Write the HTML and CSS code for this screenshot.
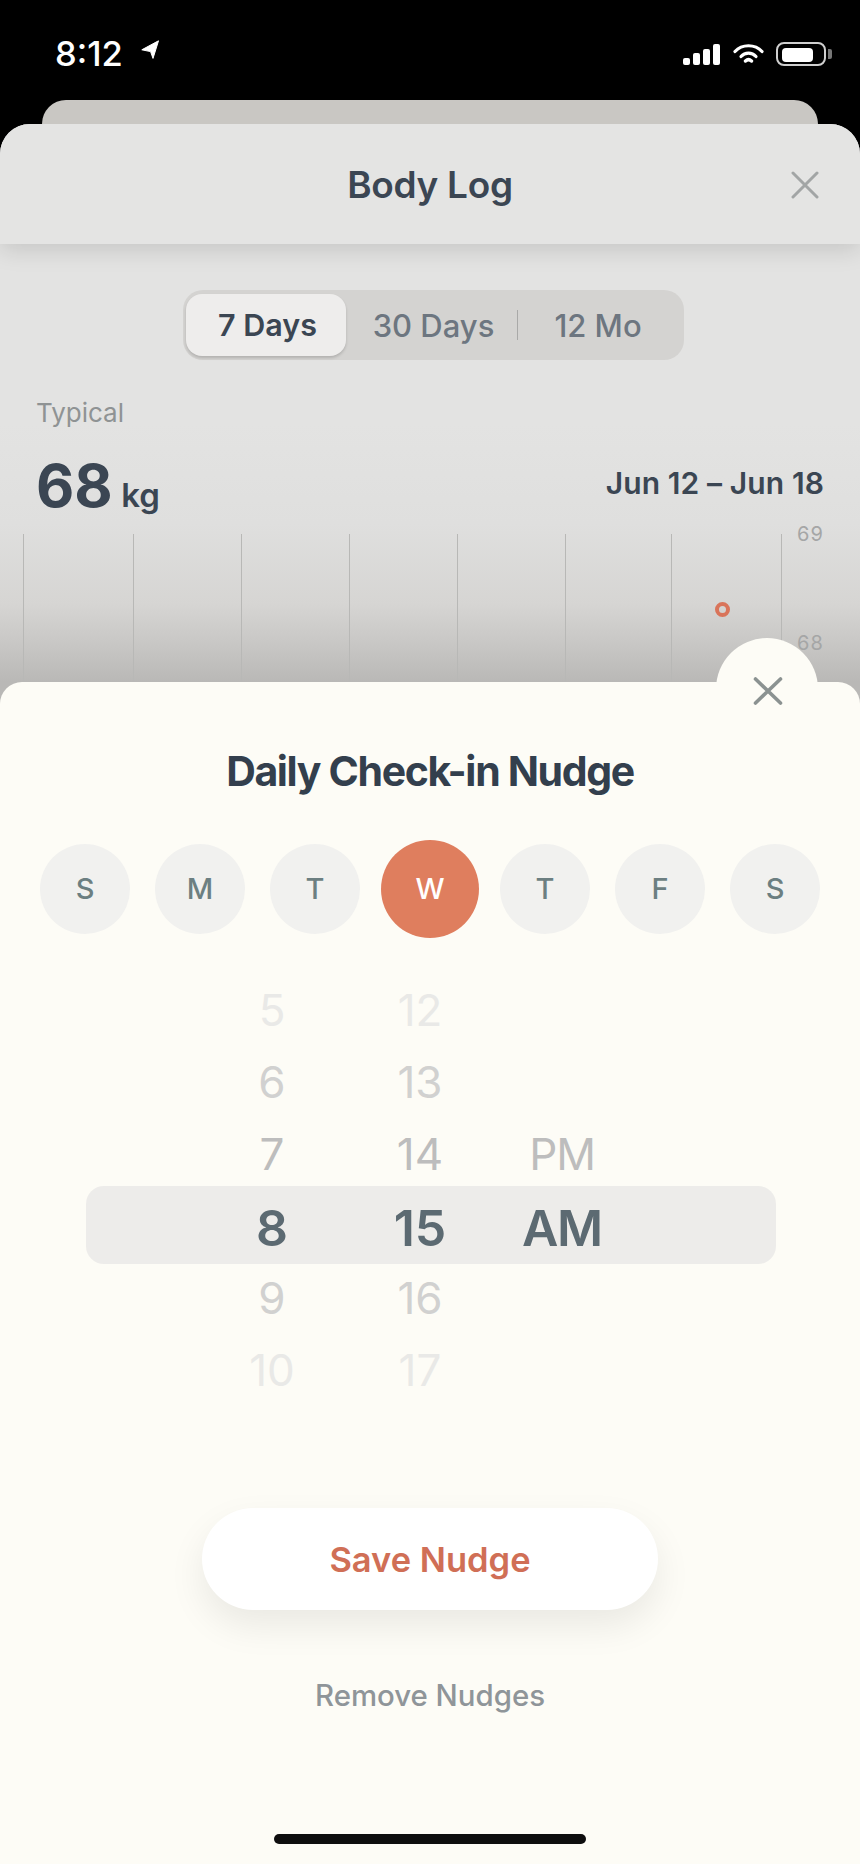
FILE: index.html
```html
<!DOCTYPE html>
<html lang="en">
<head>
    <meta charset="UTF-8">
    <meta name="viewport" content="width=device-width, initial-scale=1.0">
    <title>Daily Check-in Nudge</title>
    <link rel="stylesheet" href="styles.css">
</head>
<body>
    <div class="screen">
        <div class="status-bar">
            <div class="status-left">
                <span class="clock">8:12</span>
                <svg class="arrow" width="18" height="19" viewBox="0 0 18 19"><path d="M17.5 .8 L.8 9.8 L9.6 11.6 L12 18.4 Z" fill="#fff" stroke="#fff" stroke-width="1" stroke-linejoin="round"/></svg>
            </div>
            <div class="status-right">
                <div class="signal">
                    <span class="bar bar1"></span>
                    <span class="bar bar2"></span>
                    <span class="bar bar3"></span>
                    <span class="bar bar4"></span>
                </div>
                <svg class="wifi" width="31" height="20" viewBox="0 0 31 20" fill="none" stroke="#fff" stroke-linecap="round"><path d="M2 8.5C9 .8 22 .8 29 8.5" stroke-width="3.2"/><path d="M8 13.5C12 9 19 9 23 13.5" stroke-width="3.2"/><path d="M12.5 18C14.5 16.2 16.5 16.2 18.5 18" stroke-width="3.4"/></svg>
                <div class="battery">
                    <div class="battery-body"><span class="battery-fill"></span></div>
                    <span class="battery-cap"></span>
                </div>
            </div>
        </div>

        <div class="back-sheet"></div>

        <section class="log-sheet">
            <header class="log-header">
                <h1>Body Log</h1>
                <svg class="log-close" width="28" height="28" viewBox="0 0 28 28" stroke="#a2a5a5" stroke-width="3" stroke-linecap="round"><path d="M2 2L26 26M26 2L2 26"/></svg>
            </header>

            <div class="tabs">
                <div class="tab tab-active">7 Days</div>
                <div class="tab tab-mid">30 Days</div>
                <div class="tab-divider"></div>
                <div class="tab tab-last">12 Mo</div>
            </div>

            <p class="typical">Typical</p>
            <div class="summary">
                <div class="weight"><span class="weight-num">68</span> <span class="weight-unit">kg</span></div>
                <div class="range">Jun 12 – Jun 18</div>
            </div>

            <div class="chart">
                <div class="chart-col"></div>
                <div class="chart-col"></div>
                <div class="chart-col"></div>
                <div class="chart-col"></div>
                <div class="chart-col"></div>
                <div class="chart-col"></div>
                <div class="chart-col"><span class="dot"></span></div>
                <div class="chart-col chart-axis">
                    <span class="axis-label label-69">69</span>
                    <span class="axis-label label-68">68</span>
                </div>
            </div>
        </section>

        <div class="sheet-close">
            <svg width="30" height="28" viewBox="0 0 30 28" stroke="#8b9291" stroke-width="3.6" stroke-linecap="round"><path d="M2.5 2L27.5 26M27.5 2L2.5 26"/></svg>
        </div>

        <section class="nudge-sheet">
            <h2>Daily Check-in Nudge</h2>

            <div class="days">
                <div class="day-slot"><span class="day">S</span></div>
                <div class="day-slot"><span class="day">M</span></div>
                <div class="day-slot"><span class="day">T</span></div>
                <div class="day-slot"><span class="day day-active">W</span></div>
                <div class="day-slot"><span class="day">T</span></div>
                <div class="day-slot"><span class="day">F</span></div>
                <div class="day-slot"><span class="day">S</span></div>
            </div>

            <div class="picker">
                <div class="picker-band"></div>
                <div class="wheel wheel-hour">
                    <div class="row far">5</div>
                    <div class="row mid">6</div>
                    <div class="row near">7</div>
                    <div class="row current">8</div>
                    <div class="row mid">9</div>
                    <div class="row far">10</div>
                </div>
                <div class="wheel wheel-min">
                    <div class="row far">12</div>
                    <div class="row mid">13</div>
                    <div class="row near">14</div>
                    <div class="row current">15</div>
                    <div class="row mid">16</div>
                    <div class="row far">17</div>
                </div>
                <div class="wheel wheel-ampm">
                    <div class="row"></div>
                    <div class="row"></div>
                    <div class="row near">PM</div>
                    <div class="row current">AM</div>
                </div>
            </div>

            <button class="save-btn">Save Nudge</button>
            <div class="remove-link">Remove Nudges</div>
            <div class="home-bar"></div>
        </section>
    </div>
</body>
</html>
```

FILE: styles.css
```css
body {
    margin: 0;
    padding: 0;
    background-color: #000;
    font-family: 'Inter', 'Liberation Sans', sans-serif;
}

h1, h2, p {
    margin: 0;
}

.screen {
    position: relative;
    width: 860px;
    height: 1864px;
    overflow: hidden;
    background-color: #000;
}

/* status bar */
.status-bar {
    height: 100px;
    box-sizing: border-box;
    padding: 40px 28px 0 55px;
    display: flex;
    justify-content: space-between;
    align-items: flex-start;
}

.status-left {
    display: flex;
    align-items: flex-start;
}

.clock {
    color: #fff;
    font-size: 34.5px;
    font-weight: 500;
    line-height: 28px;
}

.arrow {
    margin-left: 18px;
}

.status-right {
    display: flex;
    align-items: flex-start;
}

.signal {
    display: flex;
    align-items: flex-end;
    gap: 3px;
    height: 21px;
    margin-top: 4px;
}

.bar {
    width: 7px;
    background-color: #fff;
    border-radius: 2px;
}

.bar1 { height: 7px; }
.bar2 { height: 12px; }
.bar3 { height: 16px; }
.bar4 { height: 21px; }

.wifi {
    margin: 3px 0 0 13px;
}

.battery {
    display: flex;
    align-items: center;
    margin: 2px 0 0 12px;
}

.battery-body {
    width: 50px;
    height: 24px;
    box-sizing: border-box;
    border: 2px solid #cfcfcf;
    border-radius: 8px;
    padding: 4px;
}

.battery-fill {
    display: block;
    width: 31px;
    height: 14px;
    background-color: #fff;
    border-radius: 4px;
}

.battery-cap {
    width: 4px;
    height: 10px;
    margin-left: 2px;
    background-color: #777;
    border-radius: 0 2px 2px 0;
}

/* stacked sheets behind the modal */
.back-sheet {
    height: 24px;
    margin: 0 42px;
    background-color: #c9c7c3;
    border-radius: 28px 28px 0 0;
}

.log-sheet {
    height: 1740px;
    border-radius: 30px 30px 0 0;
    overflow: hidden;
    background: linear-gradient(#e3e3e2 0, #e3e3e2 300px, #dfdfde 400px, #d6d5d3 480px, #c8c7c5 520px, #b9b8b6 558px);
}

.log-header {
    position: relative;
    height: 120px;
    display: flex;
    align-items: center;
    justify-content: center;
    background-color: #e4e4e3;
    box-shadow: 0 6px 22px rgba(0, 0, 0, 0.13);
}

.log-header h1 {
    color: #3b4653;
    font-size: 37px;
    font-weight: 600;
    letter-spacing: -0.3px;
}

.log-close {
    position: absolute;
    right: 41px;
    top: 47px;
}

.tabs {
    display: flex;
    align-items: center;
    box-sizing: border-box;
    width: 501px;
    height: 70px;
    margin: 46px 0 0 183px;
    padding: 0 3px;
    background-color: #d4d3d1;
    border-radius: 20px;
    font-size: 31px;
    font-weight: 500;
    color: #6d7680;
}

.tab {
    text-align: center;
}

.tab-active {
    width: 160px;
    height: 62px;
    box-sizing: border-box;
    padding-left: 3px;
    line-height: 62px;
    background-color: #eeedec;
    border-radius: 16px;
    color: #3b4653;
    font-size: 30.5px;
    font-weight: 600;
    box-shadow: 0 2px 3px rgba(0, 0, 0, 0.16);
}

.tab-mid {
    width: 167px;
    padding-left: 4px;
}

.tab-divider {
    width: 1px;
    height: 30px;
    background-color: #a9a9a8;
}

.tab-last {
    width: 160px;
}

.typical {
    margin: 37px 0 0 36px;
    color: #8f9394;
    font-size: 26px;
    line-height: 32px;
}

.summary {
    display: flex;
    justify-content: space-between;
    align-items: baseline;
    margin-top: 21px;
    padding: 0 36px;
    height: 68px;
}

.weight-num {
    color: #3b4653;
    font-size: 59px;
    font-weight: 700;
}

.weight-unit {
    color: #3b4653;
    font-size: 33px;
    font-weight: 600;
    margin-left: 4px;
}

.range {
    color: #3b4653;
    font-size: 30px;
    font-weight: 600;
    letter-spacing: 0.1px;
    position: relative;
    top: -13px;
}

.chart {
    display: grid;
    grid-template-columns: 110px 108px 108px 108px 108px 106px 110px 79px;
    height: 150px;
    margin: 16px 0 0 23px;
}

.chart-col {
    position: relative;
    border-left: 1px solid #b8b8b6;
}

.dot {
    position: absolute;
    left: 43px;
    top: 68px;
    width: 15px;
    height: 15px;
    box-sizing: border-box;
    border: 4px solid #d9745a;
    border-radius: 50%;
}

.axis-label {
    position: absolute;
    left: 15px;
    color: #a5a6a6;
    font-size: 20px;
    line-height: 20px;
    letter-spacing: 1px;
}

.label-69 { top: -10px; }
.label-68 { top: 99px; }

/* bottom sheet over the log */
.sheet-close {
    position: absolute;
    left: 716px;
    top: 638px;
    width: 102px;
    height: 102px;
    box-sizing: border-box;
    padding: 3px 0 0 1px;
    border-radius: 50%;
    background-color: #fdfcf6;
    display: flex;
    align-items: center;
    justify-content: center;
    z-index: 3;
}

.nudge-sheet {
    position: absolute;
    left: 0;
    right: 0;
    top: 682px;
    bottom: 0;
    background-color: #fdfcf6;
    border-radius: 22px 22px 0 0;
    z-index: 2;
    text-align: center;
}

.nudge-sheet h2 {
    padding-top: 65px;
    color: #333f4d;
    font-size: 41px;
    line-height: 48px;
    font-weight: 700;
    letter-spacing: -1.35px;
}

.days {
    display: flex;
    height: 98px;
    margin-top: 45px;
    padding-left: 27.5px;
}

.day-slot {
    width: 115px;
    display: flex;
    align-items: center;
    justify-content: center;
}

.day {
    width: 90px;
    height: 90px;
    line-height: 90px;
    border-radius: 50%;
    background-color: #f1f1ef;
    color: #6c7f81;
    font-size: 29px;
    font-weight: 500;
}

.day-active {
    width: 98px;
    height: 98px;
    line-height: 98px;
    background-color: #df7e5e;
    color: #fff;
}

.picker {
    position: relative;
    display: flex;
    height: 432px;
    margin-top: 36px;
    padding-left: 198px;
}

.picker-band {
    position: absolute;
    left: 86px;
    top: 212px;
    width: 690px;
    height: 78px;
    background-color: #edecea;
    border-radius: 18px;
}

.wheel {
    position: relative;
}

.wheel-hour, .wheel-min {
    width: 148px;
}

.wheel-ampm {
    width: 136px;
    letter-spacing: -1.2px;
}

.row {
    height: 72px;
    line-height: 72px;
    font-size: 44px;
    color: #bdbdbd;
}

.row.far { color: #e9e9e7; }
.row.mid { color: #d1d1d0; }
.row.near { color: #bdbdbd; }

.row.current {
    color: #5c6a72;
    font-size: 50px;
    font-weight: 600;
    line-height: 76px;
}

.save-btn {
    display: block;
    width: 456px;
    height: 102px;
    margin: 102px auto 0;
    padding: 0;
    border: none;
    border-radius: 51px;
    background-color: #fff;
    color: #d06f56;
    font-family: inherit;
    font-size: 34.5px;
    font-weight: 600;
    box-shadow: 0 16px 36px rgba(0, 0, 0, 0.08);
}

.remove-link {
    margin-top: 66px;
    color: #8f9599;
    font-size: 29.4px;
    line-height: 40px;
    font-weight: 500;
}

.home-bar {
    width: 312px;
    height: 10px;
    margin: 118px auto 0;
    background-color: #0e0e0e;
    border-radius: 5px;
}
```
